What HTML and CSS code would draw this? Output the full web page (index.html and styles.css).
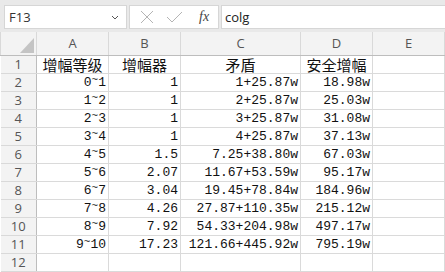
FILE: index.html
```html
<!DOCTYPE html>
<html lang="zh">
<head>
  <meta charset="UTF-8" />
  <title>Sheet</title>
  <link rel="stylesheet" href="styles.css">
</head>
<body>
  <div class="formula-bar">
    <div class="name-box">
      <span>F13</span>
      <svg class="chevron" width="8" height="5" viewBox="0 0 8 5"><path d="M1 1 L4 4 L7 1" fill="none" stroke="#555" stroke-width="1"/></svg>
    </div>
    <div class="fx-box">
      <svg width="14" height="14" viewBox="0 0 14 14"><path d="M1 1 L13 13 M13 1 L1 13" stroke="#b4b4b4" stroke-width="1" fill="none"/></svg>
      <svg width="17" height="14" viewBox="0 0 17 14"><path d="M1 7 L6 12 L16 2" stroke="#b4b4b4" stroke-width="1" fill="none"/></svg>
      <i class="fx">fx</i>
    </div>
    <div class="formula-input">colg</div>
  </div>

  <table class="sheet">
    <colgroup>
      <col class="c-row"><col class="c-n"><col class="c-n"><col class="c-w"><col class="c-n"><col class="c-n">
    </colgroup>
    <thead>
      <tr>
        <th class="corner"><svg width="14" height="15" viewBox="0 0 14 15"><path d="M14 0 L14 15 L0 15 Z" fill="#c4c4c4"/></svg></th>
        <th>A</th><th>B</th><th>C</th><th>D</th><th>E</th>
      </tr>
    </thead>
    <tbody>
      <tr><th>1</th><td class="title">增幅等级</td><td class="title">增幅器</td><td class="title">矛盾</td><td class="title">安全增幅</td><td></td></tr>
      <tr><th>2</th><td>0<span class="tl">~</span>1</td><td>1</td><td>1+25.87w</td><td>18.98w</td><td></td></tr>
      <tr><th>3</th><td>1<span class="tl">~</span>2</td><td>1</td><td>2+25.87w</td><td>25.03w</td><td></td></tr>
      <tr><th>4</th><td>2<span class="tl">~</span>3</td><td>1</td><td>3+25.87w</td><td>31.08w</td><td></td></tr>
      <tr><th>5</th><td>3<span class="tl">~</span>4</td><td>1</td><td>4+25.87w</td><td>37.13w</td><td></td></tr>
      <tr><th>6</th><td>4<span class="tl">~</span>5</td><td>1.5</td><td>7.25+38.80w</td><td>67.03w</td><td></td></tr>
      <tr><th>7</th><td>5<span class="tl">~</span>6</td><td>2.07</td><td>11.67+53.59w</td><td>95.17w</td><td></td></tr>
      <tr><th>8</th><td>6<span class="tl">~</span>7</td><td>3.04</td><td>19.45+78.84w</td><td>184.96w</td><td></td></tr>
      <tr><th>9</th><td>7<span class="tl">~</span>8</td><td>4.26</td><td>27.87+110.35w</td><td>215.12w</td><td></td></tr>
      <tr><th>10</th><td>8<span class="tl">~</span>9</td><td>7.92</td><td>54.33+204.98w</td><td>497.17w</td><td></td></tr>
      <tr><th>11</th><td>9<span class="tl">~</span>10</td><td>17.23</td><td>121.66+445.92w</td><td>795.19w</td><td></td></tr>
      <tr><th>12</th><td></td><td></td><td></td><td></td><td></td></tr>
    </tbody>
  </table>
</body>
</html>
```

FILE: styles.css
```css
body {
  margin: 0;
  width: 445px;
  height: 272px;
  overflow: hidden;
  background: #e9e9e9;
  font-family: "Open Sans", "Noto Sans", sans-serif;
}
.formula-bar {
  display: flex;
  height: 32px;
  padding: 5px 0 0 4px;
  box-sizing: border-box;
}
.name-box, .fx-box, .formula-input {
  height: 24px;
  box-sizing: border-box;
  background: #fff;
  border: 1px solid #d6d6d6;
  display: flex;
  align-items: center;
}
.name-box {
  width: 123px;
  padding: 0 7px 0 4px;
  justify-content: space-between;
  font-size: 13px;
  color: #333;
}
.fx-box {
  width: 90px;
  margin-left: 2px;
  padding-left: 10px;
  gap: 12px;
}
.fx {
  font-family: "Liberation Serif", serif;
  font-size: 14px;
  color: #444;
  margin-left: 4px;
}
.formula-input {
  flex: 1;
  margin-left: 2px;
  padding-left: 3px;
  border-right: none;
  font-size: 13px;
  color: #222;
}
.sheet {
  border-collapse: collapse;
  table-layout: fixed;
  width: 445px;
  background: #fff;
}
.c-row { width: 36px; }
.c-n { width: 72px; }
.c-w { width: 120px; }
.sheet th {
  background: #f3f3f3;
  font-weight: normal;
  color: #555;
  font-size: 13px;
  line-height: 17px;
  border: 1px solid #d9d9d9;
  padding: 0;
  overflow: hidden;
}
.sheet thead th {
  height: 23px;
  border-bottom-color: #bdbdbd;
  border-top: none;
}
.sheet tbody tr {
  height: 18px;
}
.sheet tbody th {
  height: 17px;
  border-right-color: #bdbdbd;
  border-left: none;
}
.sheet .corner {
  text-align: right;
  vertical-align: bottom;
  line-height: 0;
}
.corner svg {
  margin: 0 2px 2px 0;
}
.sheet td {
  height: 17px;
  padding: 0 2px 0 0;
  border: 1px solid #dadada;
  text-align: right;
  font-family: "Liberation Mono", monospace;
  font-size: 13px;
  color: #111;
  white-space: nowrap;
  overflow: hidden;
  line-height: 17px;
}
.sheet td.title {
  text-align: center;
  font-family: "Noto Sans CJK SC", sans-serif;
  font-size: 15px;
  padding: 0;
}
.tl {
  vertical-align: 0.3em;
  font-size: 11px;
  line-height: 0;
}
```
